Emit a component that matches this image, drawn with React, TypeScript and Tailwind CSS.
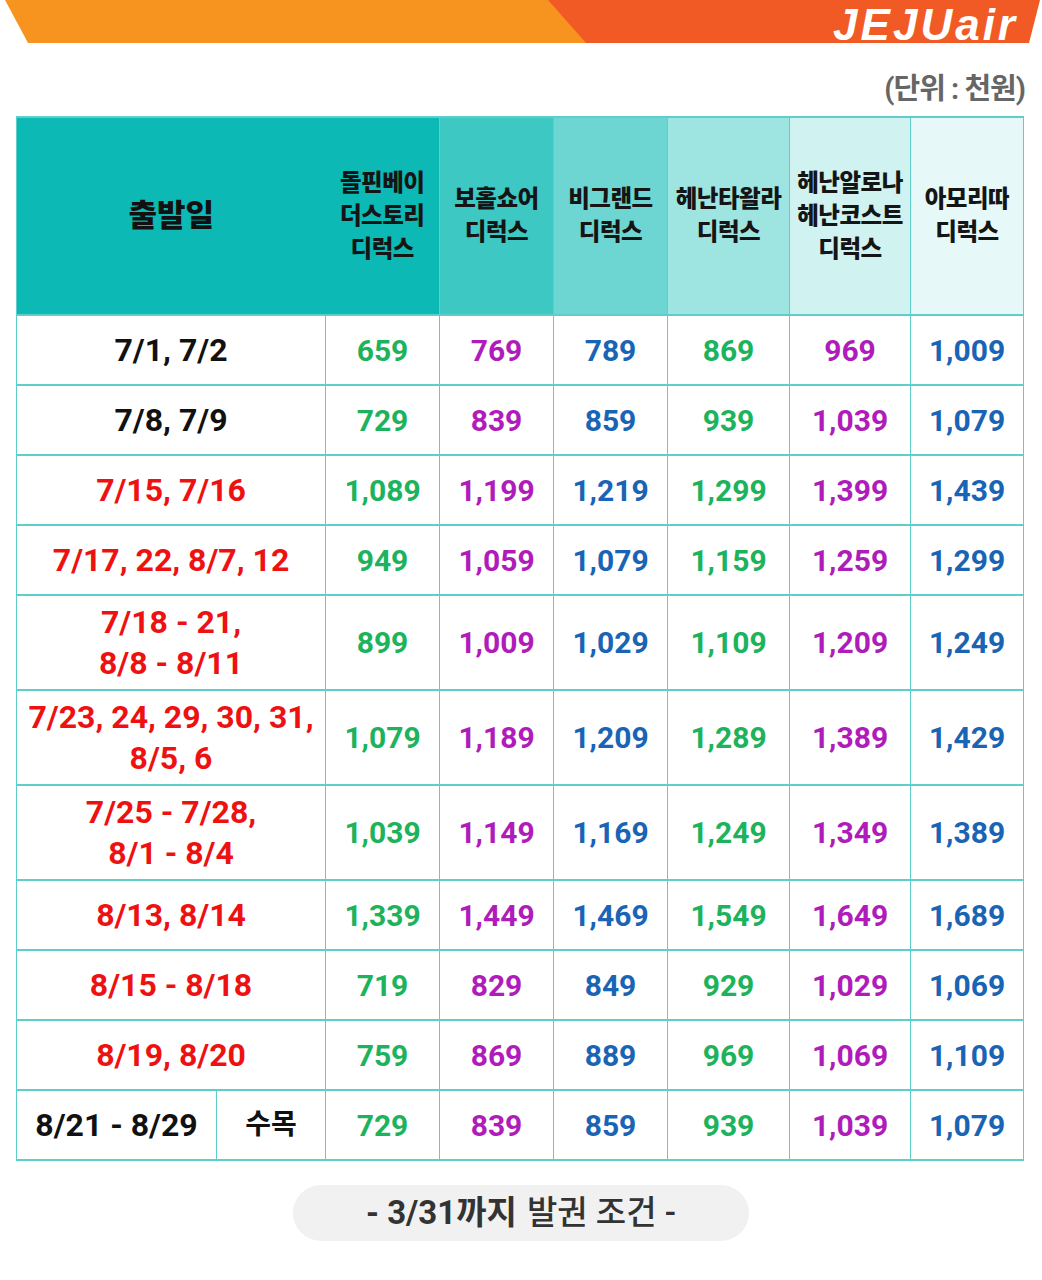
import React from "react";

const HEADERS = [
  ["돌핀베이", "더스토리", "디럭스"],
  ["보홀쇼어", "디럭스"],
  ["비그랜드", "디럭스"],
  ["헤난타왈라", "디럭스"],
  ["헤난알로나", "헤난코스트", "디럭스"],
  ["아모리따", "디럭스"],
];

// header backgrounds fade from deep teal to near white
const HEAD_BG = ["bg-[#0CB9B5]", "bg-[#3DC8C4]", "bg-[#6DD6D2]", "bg-[#9EE4E1]", "bg-[#D0F2F0]", "bg-[#E7F8F8]"];
const PRICE_COLOR = ["text-[#1CB35C]", "text-[#B01CBA]", "text-[#1A64B5]", "text-[#1CB35C]", "text-[#B01CBA]", "text-[#1A64B5]"];

interface Row {
  dates: string[];
  red: boolean;
  tall?: boolean;
  prices: number[];
}

const ROWS: Row[] = [
  { dates: ["7/1, 7/2"], red: false, prices: [659, 769, 789, 869, 969, 1009] },
  { dates: ["7/8, 7/9"], red: false, prices: [729, 839, 859, 939, 1039, 1079] },
  { dates: ["7/15, 7/16"], red: true, prices: [1089, 1199, 1219, 1299, 1399, 1439] },
  { dates: ["7/17, 22, 8/7, 12"], red: true, prices: [949, 1059, 1079, 1159, 1259, 1299] },
  { dates: ["7/18 - 21,", "8/8 - 8/11"], red: true, tall: true, prices: [899, 1009, 1029, 1109, 1209, 1249] },
  { dates: ["7/23, 24, 29, 30, 31,", "8/5, 6"], red: true, tall: true, prices: [1079, 1189, 1209, 1289, 1389, 1429] },
  { dates: ["7/25 - 7/28,", "8/1 - 8/4"], red: true, tall: true, prices: [1039, 1149, 1169, 1249, 1349, 1389] },
  { dates: ["8/13, 8/14"], red: true, prices: [1339, 1449, 1469, 1549, 1649, 1689] },
  { dates: ["8/15 - 8/18"], red: true, prices: [719, 829, 849, 929, 1029, 1069] },
  { dates: ["8/19, 8/20"], red: true, prices: [759, 869, 889, 969, 1069, 1109] },
];

const LAST = [729, 839, 859, 939, 1039, 1079];

const cell = "border-x border-y-2 border-[#5FCDC9] text-center align-middle";

function PriceCells({ prices }: { prices: number[] }) {
  return (
    <>
      {prices.map((p, i) => (
        <td key={i} className={`${cell} ${PRICE_COLOR[i]} text-[30px] font-bold`}>
          {p.toLocaleString("en-US")}
        </td>
      ))}
    </>
  );
}

export default function App() {
  return (
    <div className="w-[1042px] h-[1280px] bg-white font-[Roboto,'Noto_Sans_CJK_KR',sans-serif]">
      {/* banner */}
      <div className="relative h-[44px]">
        <svg className="absolute inset-0" width="1042" height="44" viewBox="0 0 1042 44">
          <polygon points="5,0 550,0 588,43 28,43" fill="#F7941F" />
          <polygon points="548,0 1040,0 1029,43 586,43" fill="#F15A25" />
        </svg>
        <div className="absolute right-[18px] top-0 px-[6px] text-white italic font-black text-[44px] leading-[50px] tracking-[3px] font-['Liberation_Sans',sans-serif]">
          JEJUair
        </div>
      </div>

      {/* unit */}
      <div className="h-[72px] pt-[20px] pr-[17px] flex items-center justify-end">
        <span className="text-[29px] font-bold text-[#666666] tracking-[-1px]">(단위 : 천원)</span>
      </div>

      <table className="ml-[16px] w-[1007px] table-fixed border-collapse">
        <colgroup>
          <col className="w-[200px]" />
          <col className="w-[109px]" />
          <col className="w-[114px]" />
          <col className="w-[114px]" />
          <col className="w-[114px]" />
          <col className="w-[122px]" />
          <col className="w-[121px]" />
          <col className="w-[113px]" />
        </colgroup>
        <thead>
          <tr className="h-[198px]">
            <th colSpan={2} className={`${cell} border-r-0 ${HEAD_BG[0]} text-[31px] font-black text-[#111]`}>
              출발일
            </th>
            {HEADERS.map((lines, i) => (
              <th
                key={i}
                className={`${cell} ${i === 0 ? "border-l-0" : ""} ${HEAD_BG[i]} text-[23.5px] leading-[33px] font-black text-[#151515] whitespace-nowrap tracking-[-0.5px]`}
              >
                {lines.map((l) => (
                  <div key={l}>{l}</div>
                ))}
              </th>
            ))}
          </tr>
        </thead>
        <tbody>
          {ROWS.map((r, ri) => (
            <tr key={ri} className={r.tall ? "h-[95px]" : "h-[70px]"}>
              <td
                colSpan={2}
                className={`${cell} text-[32px] leading-[41px] font-bold whitespace-nowrap ${r.red ? "text-[#EE1111]" : "text-[#111]"}`}
              >
                {r.dates.map((d) => (
                  <div key={d}>{d}</div>
                ))}
              </td>
              <PriceCells prices={r.prices} />
            </tr>
          ))}
          <tr className="h-[70px]">
            <td className={`${cell} text-[32px] font-bold text-[#111] whitespace-nowrap`}>8/21 - 8/29</td>
            <td className={`${cell} text-[28px] font-bold text-[#111]`}>수목</td>
            <PriceCells prices={LAST} />
          </tr>
        </tbody>
      </table>

      {/* footnote pill */}
      <div className="flex justify-center mt-[24px]">
        <div className="w-[456px] h-[56px] rounded-full bg-[#F1F1F1] flex items-center justify-center text-[33px] text-[#333333]">
          <span className="font-bold">- 3/31까지</span>
          <span className="font-medium ml-[10px]">발권 조건 -</span>
        </div>
      </div>
    </div>
  );
}
